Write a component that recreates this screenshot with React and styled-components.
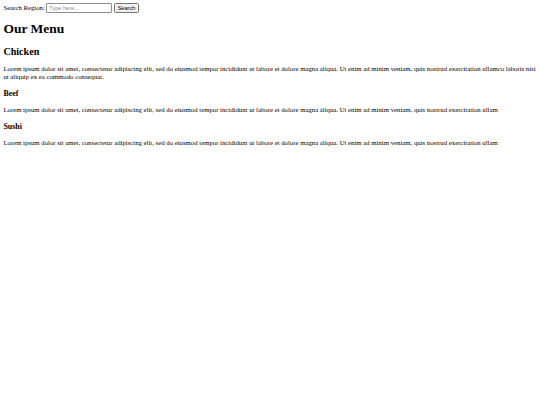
import styled, { createGlobalStyle } from 'styled-components';

const GlobalStyle = createGlobalStyle`
  body {
    margin: 3.4px;
    font-family: 'Liberation Serif', 'Times New Roman', serif;
    font-size: 6.75px;
    color: #000;
    background: #fff;
  }
`;

const SearchBar = styled.form`
  display: flex;
  align-items: center;
  height: 9px;
  margin: 0;
`;

const SearchLabel = styled.label`
  margin-right: 1.5px;
`;

const SearchInput = styled.input`
  box-sizing: border-box;
  width: 66px;
  height: 10px;
  padding: 0 2px;
  border: 1px solid #8f8f8f;
  border-radius: 1px;
  font-family: 'Liberation Sans', Arial, sans-serif;
  font-size: 5.6px;
  &::placeholder {
    color: #8a8a8a;
  }
`;

const SearchButton = styled.button`
  box-sizing: border-box;
  width: 25px;
  height: 9.5px;
  margin-left: 1.7px;
  padding: 0;
  border: 1px solid #767676;
  border-radius: 1.5px;
  background: #efefef;
  font-family: 'Liberation Sans', Arial, sans-serif;
  font-size: 5.6px;
  color: #000;
`;

const Title = styled.h1`
  font-size: 13.5px;
  margin: 8.3px 0 9.3px;
`;

const Category = styled.h2`
  font-size: 10.1px;
  margin: 8.4px 0;
`;

const Dish = styled.h3`
  font-size: 7.9px;
  margin: 8.4px 0 7.9px;
`;

const Description = styled.p`
  margin: 7.2px 0;
  line-height: 1.12;
`;

const lorem =
  'Lorem ipsum dolor sit amet, consectetur adipiscing elit, sed do eiusmod tempor incididunt ut labore et dolore magna aliqua. Ut enim ad minim veniam, quis nostrud exercitation ullam';

function App() {
  return (
    <>
      <GlobalStyle />
      <SearchBar onSubmit={e => e.preventDefault()}>
        <SearchLabel htmlFor="region">Search Region:</SearchLabel>
        <SearchInput id="region" type="text" placeholder="Type here..." />
        <SearchButton type="submit">Search</SearchButton>
      </SearchBar>
      <Title>Our Menu</Title>
      <Category>Chicken</Category>
      <Description>
        {lorem}co laboris nisi ut aliquip ex ea commodo consequat.
      </Description>
      <Dish>Beef</Dish>
      <Description>{lorem}</Description>
      <Dish>Sushi</Dish>
      <Description>{lorem}</Description>
    </>
  );
}

export default App;
